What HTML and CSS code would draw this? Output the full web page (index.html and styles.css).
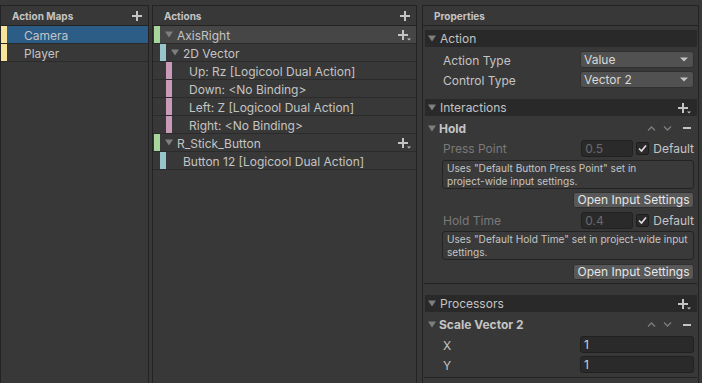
FILE: index.html
```html
<!DOCTYPE html>
<html>
<head>
<meta charset="utf-8">
<link rel="stylesheet" href="styles.css">
</head>
<body>
<div class="window">
  <section class="panel maps">
    <header class="phead"><span>Action Maps</span><svg class="plus" width="10" height="10" viewBox="0 0 10 10"><path d="M4 0h2v10H4zM0 4h10v2H0z" fill="#c4c4c4"/></svg></header>
    <div class="row"><i class="bar yellow"></i><div class="rc sel"><span>Camera</span></div></div>
    <div class="row"><i class="bar yellow"></i><div class="rc"><span>Player</span></div></div>
  </section>

  <section class="panel actions">
    <header class="phead"><span>Actions</span><svg class="plus" width="10" height="10" viewBox="0 0 10 10"><path d="M4 0h2v10H4zM0 4h10v2H0z" fill="#c4c4c4"/></svg></header>
    <div class="row in0"><i class="bar green"></i><div class="rc f hl"><svg class="tri" width="8" height="7" viewBox="0 0 8 7"><path d="M0 0.5h8L4 6.5z" fill="#7e7e7e"/></svg><span>AxisRight</span><svg class="plusdd" width="13" height="11" viewBox="0 0 13 11"><path d="M4 0h2v10H4zM0 4h10v2H0z" fill="#c4c4c4"/><path d="M9 8.5h4L11 10.5z" fill="#c4c4c4"/></svg></div></div>
    <div class="row in1"><i class="bar teal"></i><div class="rc f"><svg class="tri" width="8" height="7" viewBox="0 0 8 7"><path d="M0 0.5h8L4 6.5z" fill="#7e7e7e"/></svg><span>2D Vector</span></div></div>
    <div class="row in2"><i class="bar pink"></i><div class="rc"><span>Up: Rz [Logicool Dual Action]</span></div></div>
    <div class="row in2"><i class="bar pink"></i><div class="rc"><span>Down: &lt;No Binding&gt;</span></div></div>
    <div class="row in2"><i class="bar pink"></i><div class="rc"><span>Left: Z [Logicool Dual Action]</span></div></div>
    <div class="row in2"><i class="bar pink"></i><div class="rc"><span>Right: &lt;No Binding&gt;</span></div></div>
    <div class="row in0"><i class="bar green"></i><div class="rc f"><svg class="tri" width="8" height="7" viewBox="0 0 8 7"><path d="M0 0.5h8L4 6.5z" fill="#7e7e7e"/></svg><span>R_Stick_Button</span><svg class="plusdd" width="13" height="11" viewBox="0 0 13 11"><path d="M4 0h2v10H4zM0 4h10v2H0z" fill="#c4c4c4"/><path d="M9 8.5h4L11 10.5z" fill="#c4c4c4"/></svg></div></div>
    <div class="row in1"><i class="bar teal"></i><div class="rc"><span>Button 12 [Logicool Dual Action]</span></div></div>
  </section>

  <section class="panel props">
    <header class="phead"><span>Properties</span></header>
    <div class="pbody">
      <div class="sect s-action"><svg class="tri" width="8" height="7" viewBox="0 0 8 7"><path d="M0 0.5h8L4 6.5z" fill="#7e7e7e"/></svg><span>Action</span></div>
      <div class="field f-first"><span class="flabel">Action Type</span><div class="dropdown"><span>Value</span><svg width="8" height="5" viewBox="0 0 8 5"><path d="M0 0.5h8L4 4.5z" fill="#c4c4c4"/></svg></div></div>
      <div class="field"><span class="flabel">Control Type</span><div class="dropdown"><span>Vector 2</span><svg width="8" height="5" viewBox="0 0 8 5"><path d="M0 0.5h8L4 4.5z" fill="#c4c4c4"/></svg></div></div>

      <div class="sect s-inter"><svg class="tri" width="8" height="7" viewBox="0 0 8 7"><path d="M0 0.5h8L4 6.5z" fill="#7e7e7e"/></svg><span>Interactions</span><svg class="plusdd" width="13" height="11" viewBox="0 0 13 11"><path d="M4 0h2v10H4zM0 4h10v2H0z" fill="#c4c4c4"/><path d="M9 8.5h4L11 10.5z" fill="#c4c4c4"/></svg></div>
      <div class="sub s-hold"><svg class="tri" width="8" height="7" viewBox="0 0 8 7"><path d="M0 0.5h8L4 6.5z" fill="#7e7e7e"/></svg><b>Hold</b>
        <span class="tools"><svg width="9" height="5" viewBox="0 0 9 5"><path d="M1 4.5L4.5 1L8 4.5" stroke="#7e7e7e" stroke-width="1.3" fill="none"/></svg><svg width="9" height="5" viewBox="0 0 9 5"><path d="M1 0.5L4.5 4L8 0.5" stroke="#7e7e7e" stroke-width="1.3" fill="none"/></svg><svg class="minus" width="8" height="2" viewBox="0 0 8 2"><path d="M0 0h8v2H0z" fill="#c4c4c4"/></svg></span></div>
      <div class="field f-press"><span class="flabel dis">Press Point</span><div class="input short dis">0.5</div><span class="check"><svg width="11" height="11" viewBox="0 0 11 11"><path d="M2 5.5L4.5 8L9 2.5" stroke="#e2e2e2" stroke-width="1.6" fill="none"/></svg></span><span class="deflabel">Default</span></div>
      <div class="help h1">Uses "Default Button Press Point" set in<br>project-wide input settings.</div>
      <div class="btnrow b1"><button class="btn">Open Input Settings</button></div>
      <div class="field f-hold"><span class="flabel dis">Hold Time</span><div class="input short dis">0.4</div><span class="check"><svg width="11" height="11" viewBox="0 0 11 11"><path d="M2 5.5L4.5 8L9 2.5" stroke="#e2e2e2" stroke-width="1.6" fill="none"/></svg></span><span class="deflabel">Default</span></div>
      <div class="help h2">Uses "Default Hold Time" set in project-wide input<br>settings.</div>
      <div class="btnrow b2"><button class="btn">Open Input Settings</button></div>
      <div class="sep sep1"></div>

      <div class="sect s-proc"><svg class="tri" width="8" height="7" viewBox="0 0 8 7"><path d="M0 0.5h8L4 6.5z" fill="#7e7e7e"/></svg><span>Processors</span><svg class="plusdd" width="13" height="11" viewBox="0 0 13 11"><path d="M4 0h2v10H4zM0 4h10v2H0z" fill="#c4c4c4"/><path d="M9 8.5h4L11 10.5z" fill="#c4c4c4"/></svg></div>
      <div class="sub s-scale"><svg class="tri" width="8" height="7" viewBox="0 0 8 7"><path d="M0 0.5h8L4 6.5z" fill="#7e7e7e"/></svg><b>Scale Vector 2</b>
        <span class="tools"><svg width="9" height="5" viewBox="0 0 9 5"><path d="M1 4.5L4.5 1L8 4.5" stroke="#7e7e7e" stroke-width="1.3" fill="none"/></svg><svg width="9" height="5" viewBox="0 0 9 5"><path d="M1 0.5L4.5 4L8 0.5" stroke="#7e7e7e" stroke-width="1.3" fill="none"/></svg><svg class="minus" width="8" height="2" viewBox="0 0 8 2"><path d="M0 0h8v2H0z" fill="#c4c4c4"/></svg></span></div>
      <div class="field f-x"><span class="flabel">X</span><div class="input long">1</div></div>
      <div class="field"><span class="flabel">Y</span><div class="input long">1</div></div>
      <div class="sep"></div>
    </div>
  </section>
</div>
</body>
</html>
```

FILE: styles.css
```css
* { box-sizing: border-box; margin: 0; padding: 0; }
html, body { width: 702px; height: 383px; overflow: hidden; background: #383838; }
body { font-family: Inter, "Noto Sans", sans-serif; font-size: 12px; color: #c4c4c4; }

.window { display: flex; height: 383px; padding-top: 5px; }
.panel { border: 1px solid #232323; border-bottom: none; height: 378px; display: flex; flex-direction: column; background: #383838; }
.maps { width: 149px; }
.actions { width: 265px; margin-left: 3px; }
.props { width: 277px; margin-left: 5px; }

.phead { height: 20px; flex: none; border-bottom: 1px solid #232323; display: flex; align-items: center; justify-content: space-between; padding: 0 6px 0 11px; font-weight: 700; font-size: 10px; color: #c4c4c4; }

.row { display: flex; height: 18px; flex: none; border-bottom: 1px solid #2b2b2b; }
.actions .row { padding-left: 1px; }
.actions .row.in1 { padding-left: 7px; }
.actions .row.in2 { padding-left: 13px; }
.bar { display: block; width: 6px; flex: none; }
.yellow { background: #f9e39b; }
.green { background: #a6d69b; }
.teal { background: #98c4cb; }
.pink { background: #c99bb8; }
.rc { flex: 1; display: flex; align-items: center; padding-left: 17px; padding-right: 5px; white-space: nowrap; }
.rc span { padding-top: 2px; }
.rc.f { padding-left: 5px; }
.rc.f .tri { margin-right: 4px; }
.rc.sel { background: #2c5d87; }
.rc.hl { background: #464646; }
.rc .plusdd { margin-left: auto; margin-top: 1px; }

.pbody { display: flex; flex-direction: column; padding: 0 1px 0 2px; }
.sect { height: 17px; flex: none; background: #292929; display: flex; align-items: center; padding: 0 6px 0 3px; }
.sect .tri { margin-right: 4px; }
.sect .plusdd { margin-left: auto; margin-top: 1px; }
.s-action { margin-top: 4px; }
.s-inter { margin-top: 10px; }
.s-proc { margin-top: 11px; }

.sub { display: flex; align-items: center; padding: 0 6px 0 3px; flex: none; }
.sub .tri { margin-right: 3px; }
.sub b { font-weight: 700; }
.s-hold { height: 23px; padding-top: 1px; }
.s-scale { height: 22px; padding-top: 3px; }
.tools { margin-left: auto; display: flex; align-items: center; gap: 7px; }
.tools .minus { margin-left: 4px; }

.field { display: flex; align-items: center; height: 20px; flex: none; padding: 0 3px 0 18px; }
.f-first { margin-top: 2px; }
.f-press { height: 19px; }
.f-hold { margin-top: 2px; }
.flabel { flex: 1; padding-top: 2px; }
.f-press .flabel, .f-hold .flabel { padding-top: 0; }
.dis { color: #7a7a7a; }
.dropdown { width: 114px; height: 17px; background: #515151; border: 1px solid #303030; border-radius: 3px; display: flex; align-items: center; justify-content: space-between; padding: 0 5px 0 3px; color: #d8d8d8; }
.input { height: 17px; background: #2a2a2a; border: 1px solid #212121; border-radius: 3px; display: flex; align-items: center; padding-left: 3px; color: #d2d2d2; }
.input.short { width: 52px; }
.input.long { width: 114px; }
.input.dis { color: #6a6a6a; }
.check { width: 13px; height: 13px; margin-left: 3px; background: #2a2a2a; border: 1px solid #1c1c1c; border-radius: 2px; display: flex; align-items: center; justify-content: center; }
.deflabel { margin-left: 4px; }

.help { margin: 0 3px 0 17px; height: 29px; border: 1px solid #232323; border-radius: 3px; background: #3a3a3a; font-size: 10.1px; line-height: 13px; padding: 1px 0 0 4px; color: #c4c4c4; flex: none; white-space: nowrap; overflow: hidden; }
.h1 { margin-top: 2px; }
.h2 { margin-top: 1px; }
.btnrow { display: flex; justify-content: flex-end; padding-right: 3px; flex: none; }
.b1 { margin-top: 3px; }
.b2 { margin-top: 4px; }
.btn { width: 121px; height: 16px; background: #585858; border: 1px solid #303030; border-radius: 3px; font: 12px Inter, "Noto Sans", sans-serif; color: #e6e6e6; line-height: 14px; }

.sep { height: 1px; background: #232323; margin: 3px 0 0 -1px; flex: none; }
.sep1 { margin-top: 3px; }
.f-x { margin-top: 0; }
```
